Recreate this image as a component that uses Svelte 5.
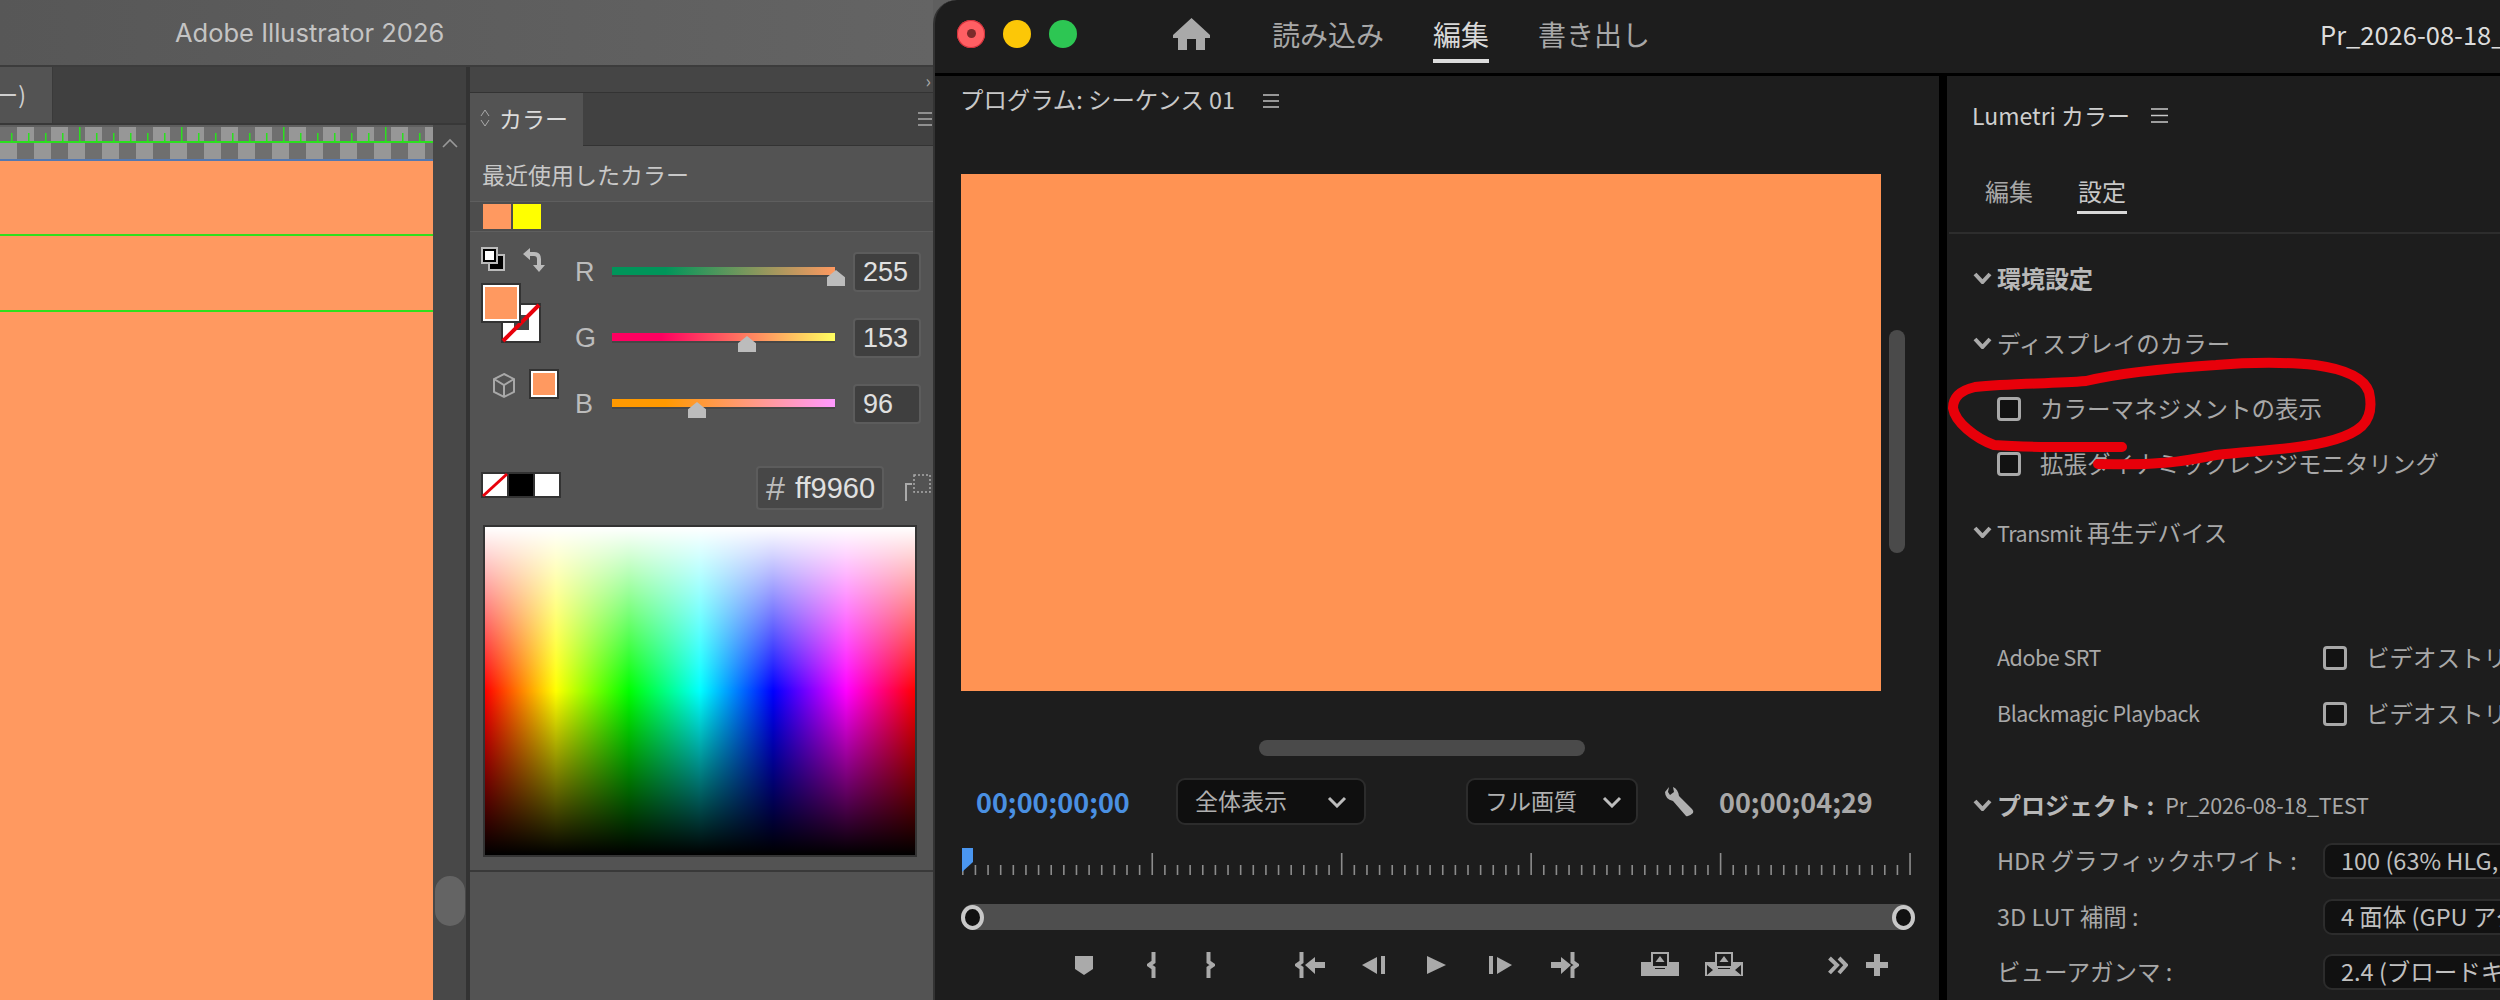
<script>
  const rulerTicks = Array.from({ length: 25 }, (_, i) => 11 + i * 17);
  const timeTicks = Array.from({ length: 76 }, (_, i) => i);
</script>

<div class="desktop">
  <section class="ai">
    <header class="ai-title"><span>Adobe Illustrator 2026</span></header>
    <div class="ai-body">
      <div class="doc">
        <div class="doc-tabs"><div class="doc-tab">ー)</div></div>
        <div class="doc-main">
          <div class="artboard-col">
            <svg class="checker" width="433" height="32">
              <rect x="0" y="14" width="433" height="2" fill="#2be01e" />
              {#each rulerTicks as x, i}
                <rect {x} y={i % 6 === 4 ? 0 : 6} width="1.5" height={i % 6 === 4 ? 14 : 8} fill="#2be01e" />
              {/each}
            </svg>
            <div class="artboard">
              <div class="guide"></div>
              <div class="guide"></div>
            </div>
          </div>
          <div class="gutter">
            <svg class="gutter-up" width="16" height="10" viewBox="0 0 16 10"><path d="M1 9 L8 2 L15 9" fill="none" stroke="#999" stroke-width="1.6" /></svg>
            <div class="gutter-thumb"></div>
          </div>
        </div>
      </div>

      <aside class="color-panel">
        <div class="dock-head"><span>›</span></div>
        <div class="panel-tabs">
          <div class="panel-tab">
            <svg width="10" height="18" viewBox="0 0 10 18"><path d="M1 7 L5 1 L9 7 M1 11 L5 17 L9 11" fill="none" stroke="#aaa" stroke-width="1" /></svg>
            <span>カラー</span>
          </div>
          <div class="panel-tab-rest">
            <svg width="16" height="16" viewBox="0 0 16 16"><path d="M1 2 H15 M1 8 H15 M1 14 H15" stroke="#aaa" stroke-width="1.6" /></svg>
          </div>
        </div>
        <div class="recent-label">最近使用したカラー</div>
        <div class="recent-strip">
          <div class="recent orange"></div>
          <div class="recent yellow"></div>
        </div>

        <div class="mixer">
          <svg class="fill-stroke" width="80" height="152" viewBox="0 0 80 152">
            <rect x="7" y="7" width="17" height="17" fill="#bbb" />
            <rect x="9" y="9" width="13" height="13" fill="#000" />
            <rect x="0" y="0" width="17" height="17" fill="#bbb" />
            <rect x="2" y="2" width="13" height="13" fill="#000" />
            <rect x="4" y="4" width="9" height="9" fill="#fff" />
            <path d="M47 7 H53 Q58 7 58 12 V19" fill="none" stroke="#bbb" stroke-width="4" />
            <path d="M42 7 L49 1 V13 Z M58 25 L52 18 H64 Z" fill="#bbb" />

            <rect x="20" y="56" width="40" height="40" fill="#333" />
            <rect x="22" y="58" width="36" height="36" fill="#fff" />
            <rect x="33" y="68" width="15" height="15" fill="#444" />
            <path d="M22 94 L58 58" stroke="#e8000b" stroke-width="4" />
            <rect x="0" y="36" width="40" height="40" fill="#333" />
            <rect x="2" y="38" width="36" height="36" fill="#fff" />
            <rect x="4" y="40" width="32" height="32" fill="#ff9960" />

            <path d="M23 127 L33 132 V145 L23 150 L13 145 V132 Z M13 132 L23 138 L33 132 M23 138 V150" fill="none" stroke="#a8a8a8" stroke-width="2" />
            <rect x="48" y="122" width="30" height="30" fill="#333" />
            <rect x="50" y="124" width="26" height="26" fill="#fff" />
            <rect x="52" y="126" width="22" height="22" fill="#ff9960" />
          </svg>
          <div class="channels">
            <div class="channel">
              <span class="letter">R</span>
              <div class="slider red"><i class="thumb t-r"></i></div>
              <div class="num">255</div>
            </div>
            <div class="channel">
              <span class="letter">G</span>
              <div class="slider green"><i class="thumb t-g"></i></div>
              <div class="num">153</div>
            </div>
            <div class="channel">
              <span class="letter">B</span>
              <div class="slider blue"><i class="thumb t-b"></i></div>
              <div class="num">96</div>
            </div>
          </div>
        </div>

        <div class="hex-row">
          <svg class="presets" width="80" height="26" viewBox="0 0 80 26">
            <rect width="80" height="26" fill="#333" />
            <rect x="2" y="2" width="24" height="22" fill="#fff" />
            <path d="M2 24 L26 2" stroke="#e8000b" stroke-width="3" />
            <rect x="28" y="2" width="24" height="22" fill="#000" />
            <rect x="54" y="2" width="24" height="22" fill="#fff" />
          </svg>
          <div class="hex"><span class="hash">#</span><span class="hex-val">ff9960</span></div>
          <svg class="websafe" width="26" height="28" viewBox="0 0 26 28">
            <rect x="9" y="1" width="16" height="17" fill="none" stroke="#aaa" stroke-width="1.5" stroke-dasharray="2 2" />
            <path d="M1 27 V10 H7" fill="none" stroke="#aaa" stroke-width="2" />
          </svg>
        </div>

        <div class="spectrum"></div>
        <div class="panel-rule"></div>
      </aside>
    </div>
  </section>

  <section class="pr">
    <header class="pr-head">
      <div class="lights">
        <div class="light close"><i></i></div>
        <div class="light min"></div>
        <div class="light max"></div>
      </div>
      <svg class="home" width="37" height="32" viewBox="0 0 37 32">
        <path d="M18.5 0 L37 17 L37 20 H32 V32 H23 V21 H14 V32 H5 V20 H0 V17 Z" fill="#a9a9a9" />
      </svg>
      <nav class="modes">
        <span>読み込み</span>
        <span class="on">編集</span>
        <span>書き出し</span>
      </nav>
      <div class="project-name">Pr_2026-08-18_TEST</div>
    </header>

    <div class="pr-body">
      <div class="program">
        <div class="program-title">
          プログラム: シーケンス 01
          <svg width="16" height="14" viewBox="0 0 16 14"><path d="M0 1 H16 M0 7 H16 M0 13 H16" stroke="#c0c0c0" stroke-width="1.6" /></svg>
        </div>
        <div class="stage">
          <div class="video"></div>
          <div class="vscroll"></div>
        </div>
        <div class="hscroll"></div>
        <div class="program-bar">
          <span class="tc-now">00;00;00;00</span>
          <div class="pick pick-fit"><span>全体表示</span>
            <svg width="20" height="12" viewBox="0 0 20 12"><path d="M2 2 L10 10 L18 2" fill="none" stroke="#bdbdbd" stroke-width="3" /></svg>
          </div>
          <div class="pick pick-quality"><span>フル画質</span>
            <svg width="20" height="12" viewBox="0 0 20 12"><path d="M2 2 L10 10 L18 2" fill="none" stroke="#bdbdbd" stroke-width="3" /></svg>
          </div>
          <svg class="wrench" width="30" height="30" viewBox="0 0 30 30">
            <path d="M5 0 L1 5 Q1 12 9 14 L22 29 Q25 30 29 26 Q30 24 28 22 L15 9 Q14 2 9 0 L10 5 L6 8 L4 5 Z" fill="#b0b0b0" />
          </svg>
          <span class="tc-end">00;00;04;29</span>
        </div>
        <svg class="time-ruler" width="952" height="27" viewBox="0 0 952 27">
          {#each timeTicks as i}
            <rect x={1 + i * 12.63} y={i % 15 === 0 ? 5 : 17} width="1.6" height={i % 15 === 0 ? 22 : 10} fill="#8c8c8c" />
          {/each}
          <path d="M1 0 H12 V14 L1 24 Z" fill="#4a96f0" />
        </svg>
        <div class="range">
          <div class="range-knob"></div>
          <div class="range-knob"></div>
        </div>
        <div class="transport">
          <svg class="b-marker" width="18" height="26"><path d="M0 4 H18 V17 L9 23 L0 17 Z" /></svg>
          <svg class="b-in" width="9" height="26"><path class="brace" d="M6.5 0 V10 L2 13 L6.5 16 V26" /></svg>
          <svg class="b-out" width="9" height="26"><path class="brace" d="M2.5 0 V10 L7 13 L2.5 16 V26" /></svg>
          <svg class="b-goin" width="30" height="26">
            <path class="brace" d="M6.5 0 V10 L2 13 L6.5 16 V26" />
            <path d="M10 13 L20 5 V10 H30 V16 H20 V22 Z" />
          </svg>
          <svg class="b-back" width="23" height="26"><path d="M0 13 L15 5 V22 Z M19 4 H23 V22 H19 Z" /></svg>
          <svg class="b-play" width="19" height="26"><path d="M0 4 L19 13 L0 22 Z" /></svg>
          <svg class="b-fwd" width="24" height="26"><path d="M0 4 H4 V22 H0 Z M8 5 L23 13 L8 22 Z" /></svg>
          <svg class="b-goout" width="28" height="26">
            <path class="brace" d="M21.5 0 V10 L26 13 L21.5 16 V26" />
            <path d="M20 13 L10 5 V10 H0 V16 H10 V22 Z" />
          </svg>
          <svg class="b-lift" width="38" height="24">
            <path d="M0 10 H14 V24 H0 Z M24 10 H38 V24 H24 Z M11 17 H27 V24 H11 Z" />
            <rect class="box" x="11" y="1" width="16" height="14" />
            <path d="M19 4 L23.500 10 H14.500 Z" />
          </svg>
          <svg class="b-extract" width="38" height="24">
            <path d="M0 10 H13 V24 H0 Z M25 10 H38 V24 H25 Z M12 17 H26 V24 H12 Z" />
            <rect class="box" x="11" y="1" width="16" height="14" />
            <path d="M19 4 L23.500 10 H14.500 Z" />
            <path class="cut" d="M2 13 L8 18 L2 23 Z M36 13 L30 18 L36 23 Z" />
          </svg>
          <svg class="b-more" width="20" height="26"><path class="chev" d="M1.500 6 L9 13 L1.500 21 M11 6 L18 13 L11 21" /></svg>
          <svg class="b-add" width="22" height="26"><path d="M8 2 H14 V10 H22 V16 H14 V24 H8 V16 H0 V10 H8 Z" /></svg>
        </div>
      </div>

      <div class="lumetri">
        <div class="lumetri-title">
          <span>Lumetri カラー</span>
          <svg width="17" height="15" viewBox="0 0 17 15"><path d="M0 1 H17 M0 7.500 H17 M0 14 H17" stroke="#c8c8c8" stroke-width="1.6" /></svg>
        </div>
        <div class="lumetri-tabs">
          <span>編集</span>
          <span class="on">設定</span>
        </div>

        <div class="row head m27">
          <svg class="chevron" width="19" height="12" viewBox="0 0 19 12"><path d="M2 2 L9.500 10 L17 2" /></svg>
          <b>環境設定</b>
        </div>
        <div class="row head m29">
          <svg class="chevron" width="19" height="12" viewBox="0 0 19 12"><path d="M2 2 L9.500 10 L17 2" /></svg>
          <span>ディスプレイのカラー</span>
        </div>
        <div class="row item m29"><i class="check"></i>カラーマネジメントの表示</div>
        <div class="row item m19"><i class="check"></i>拡張ダイナミックレンジモニタリング</div>
        <div class="row head m33">
          <svg class="chevron" width="19" height="12" viewBox="0 0 19 12"><path d="M2 2 L9.500 10 L17 2" /></svg>
          <span><span class="latin">Transmit</span> 再生デバイス</span>
        </div>
        <div class="row setting m89"><span class="label latin">Adobe SRT</span><i class="check"></i>ビデオストリーム</div>
        <div class="row setting m20"><span class="label latin">Blackmagic Playback</span><i class="check"></i>ビデオストリーム</div>
        <div class="row head m56">
          <svg class="chevron" width="19" height="12" viewBox="0 0 19 12"><path d="M2 2 L9.500 10 L17 2" /></svg>
          <b>プロジェクト :</b><span class="proj latin">Pr_2026-08-18_TEST</span>
        </div>
        <div class="row setting m19"><span class="label">HDR グラフィックホワイト :</span><div class="select">100 (63% HLG, 58% PQ)</div></div>
        <div class="row setting m20"><span class="label">3D LUT 補間 :</span><div class="select">4 面体 (GPU アクセラレーション)</div></div>
        <div class="row setting m19"><span class="label">ビューアガンマ :</span><div class="select">2.4 (ブロードキャスト)</div></div>
      </div>
    </div>
  </section>

  <svg class="scribble" width="2500" height="1000" viewBox="0 0 2500 1000">
    <path d="M2122 447 C2080 447 2030 448 1994 445 C1975 438 1955 422 1953 408 C1953 396 1962 390 1975 387 C2010 383 2050 384 2086 381 C2115 374 2170 368 2216 365 C2250 362 2290 362 2315 365 C2345 369 2364 378 2369 392 C2372 405 2371 417 2362 426 C2350 437 2325 444 2290 448 C2265 451 2240 452 2216 455 C2195 459 2180 462 2160 463 C2140 465 2120 464 2098 464" />
  </svg>
</div>

<style>
  :global(body) {
    margin: 0;
    background: #5e5e5e;
  }

  .desktop {
    position: relative;
    display: flex;
    width: 2500px;
    height: 1000px;
    overflow: hidden;
    background: #5f5f5f;
    font-family: "Noto Sans CJK JP", "Noto Sans", sans-serif;
  }

  /* illustrator */
  .ai {
    flex: none;
    display: flex;
    flex-direction: column;
    width: 933px;
    font-family: "Noto Sans CJK JP", "Liberation Sans", sans-serif;
  }

  .ai-title {
    flex: none;
    height: 65px;
    padding-left: 175px;
    display: flex;
    align-items: center;
    border-bottom: 2px solid #3c3c3c;
    background: linear-gradient(90deg, #575757, #646464);
    color: #c4c4c4;
    font-family: Inter, sans-serif;
    font-size: 25.500px;
  }

  .ai-body {
    flex: 1;
    display: flex;
    min-height: 0;
  }

  .doc {
    flex: none;
    width: 466px;
    display: flex;
    flex-direction: column;
  }

  .doc-tabs {
    flex: none;
    height: 58px;
    background: #404040;
    border-bottom: 2px solid #383838;
    box-sizing: border-box;
  }

  .doc-tab {
    width: 53px;
    height: 56px;
    box-sizing: border-box;
    display: flex;
    align-items: center;
    justify-content: flex-end;
    padding: 0 26px 3px 0;
    background: #535353;
    border-right: 1px solid #3a3a3a;
    color: #cfcfcf;
    font-size: 23px;
    overflow: hidden;
    white-space: nowrap;
  }

  .doc-main {
    flex: 1;
    display: flex;
    min-height: 0;
  }

  .artboard-col {
    flex: none;
    width: 433px;
    margin-top: 2px;
  }

  .checker {
    display: block;
    background: repeating-conic-gradient(#979797 0 25%, #6f6f6f 0 50%) 0 -2px / 34px 34px;
  }

  .artboard {
    height: 900px;
    padding-top: 73px;
    background: #ff9960;
    border-top: 2px solid #5578b0;
  }

  .guide {
    height: 2px;
    margin-bottom: 74px;
    background: #2fe01c;
  }

  .gutter {
    flex: 1;
    display: flex;
    flex-direction: column;
    align-items: center;
    background: #484848;
  }

  .gutter-up {
    margin-top: 13px;
  }

  .gutter-thumb {
    width: 30px;
    height: 50px;
    margin-top: 728px;
    border-radius: 15px;
    background: #646464;
  }

  .color-panel {
    flex: none;
    width: 467px;
    box-sizing: border-box;
    display: flex;
    flex-direction: column;
    border-left: 4px solid #333;
    background: #535353;
    color: #c6c6c6;
  }

  .dock-head {
    flex: none;
    height: 25px;
    display: flex;
    align-items: center;
    justify-content: flex-end;
    padding-right: 2px;
    background: #454545;
    border-bottom: 1px solid #333;
    color: #aaa;
    font-size: 18px;
  }

  .panel-tabs {
    flex: none;
    display: flex;
    height: 53px;
  }

  .panel-tab {
    width: 113px;
    display: flex;
    align-items: center;
    gap: 9px;
    padding: 0 0 3px 10px;
    box-sizing: border-box;
    font-size: 23px;
    color: #dcdcdc;
  }

  .panel-tab-rest {
    flex: 1;
    display: flex;
    align-items: center;
    justify-content: flex-end;
    background: #414141;
    border-bottom: 1px solid #333;
  }

  .recent-label {
    flex: none;
    height: 55px;
    padding-left: 12px;
    line-height: 56px;
    font-size: 23px;
    color: #c8c8c8;
  }

  .recent-strip {
    flex: none;
    display: flex;
    gap: 2px;
    height: 31px;
    padding-left: 13px;
    box-sizing: border-box;
    padding-block: 2px;
    background: #4d4d4d;
    border-block: 1px solid #5e5e5e;
  }

  .recent {
    width: 28px;
  }

  .orange {
    background: #ff9960;
  }

  .yellow {
    background: #ffff00;
  }

  .mixer {
    flex: none;
    display: flex;
    margin-top: 7px;
    padding-left: 11px;
  }

  .fill-stroke {
    flex: none;
    margin-top: 8px;
    margin-right: 14px;
  }

  .channels {
    display: flex;
    flex-direction: column;
  }

  .channel {
    height: 66px;
    display: flex;
    align-items: center;
  }

  .letter {
    width: 37px;
    font-family: "Liberation Sans", sans-serif;
    font-size: 27px;
    color: #bcbcbc;
  }

  .slider {
    position: relative;
    width: 223px;
    height: 8px;
    margin-top: -2px;
    box-shadow: 0 2px 0 #464646;
  }

  .red {
    background: linear-gradient(90deg, #00955a 0 24%, #ff9960);
  }

  .green {
    background: linear-gradient(90deg, #ff0060 0 22%, #ffff60);
  }

  .blue {
    background: linear-gradient(90deg, #ff9900 0 24%, #ff99ff);
  }

  .thumb {
    position: absolute;
    top: 3px;
    width: 18px;
    height: 16px;
    background: #bcbcbc;
    clip-path: polygon(50% 0, 100% 45%, 100% 100%, 0 100%, 0 45%);
  }

  .t-r {
    left: 215px;
  }

  .t-g {
    left: 126px;
  }

  .t-b {
    left: 76px;
  }

  .num {
    width: 68px;
    height: 40px;
    margin-left: 18px;
    padding-left: 8px;
    box-sizing: border-box;
    display: flex;
    align-items: center;
    border: 2px solid #5c5c5c;
    border-radius: 4px;
    background: #3f3f3f;
    color: #e0e0e0;
    font-family: "Liberation Sans", sans-serif;
    font-size: 27px;
  }

  .hex-row {
    flex: none;
    display: flex;
    align-items: flex-start;
    height: 44px;
    margin-top: 29px;
    padding-left: 11px;
  }

  .presets {
    margin-top: 6px;
  }

  .hex {
    width: 128px;
    height: 44px;
    margin-left: 195px;
    box-sizing: border-box;
    display: flex;
    align-items: center;
    border: 2px solid #5c5c5c;
    border-radius: 4px;
    background: #474747;
    color: #e0e0e0;
    font-family: "Liberation Sans", sans-serif;
    font-size: 29px;
  }

  .hash {
    width: 37px;
    padding-left: 8px;
    box-sizing: border-box;
    font-size: 34px;
    color: #bcbcbc;
  }

  .websafe {
    margin: 8px 0 0 21px;
  }

  .spectrum {
    flex: none;
    width: 430px;
    height: 328px;
    margin: 15px 0 0 13px;
    border: 2px solid #333;
    background:
      linear-gradient(180deg, #fff, rgba(255, 255, 255, 0) 50%, rgba(0, 0, 0, 0) 50%, #000),
      linear-gradient(90deg, #f00, #ff0 16.500%, #0f0 33.500%, #0ff 50%, #00f 67%, #f0f 84%, #f00);
  }

  .panel-rule {
    height: 2px;
    margin-top: 13px;
    background: #393939;
  }

  /* premiere */
  .pr {
    flex: 1;
    min-width: 0;
    display: flex;
    flex-direction: column;
    border-left: 2px solid #333;
    border-top-left-radius: 24px;
    background: #1d1d1d;
    overflow: hidden;
    color: #a8a8a8;
  }

  .pr-head {
    flex: none;
    display: flex;
    align-items: center;
    height: 67px;
    padding-bottom: 6px;
    border-bottom: 3px solid #000;
  }

  .lights {
    display: flex;
    gap: 18px;
    margin-left: 22px;
  }

  .light {
    width: 28px;
    height: 28px;
    display: flex;
    align-items: center;
    justify-content: center;
    border-radius: 50%;
  }

  .light i {
    width: 9px;
    height: 9px;
    border-radius: 50%;
    background: #7c2a2a;
  }

  .close {
    background: #ff5f63;
    box-shadow: inset 0 0 0 1px #d2303a;
  }

  .min {
    background: #fcc707;
  }

  .max {
    background: #2dc653;
  }

  .home {
    margin-left: 96px;
    margin-top: 1px;
  }

  .modes {
    display: flex;
    gap: 49px;
    margin-left: 62px;
    font-size: 28px;
  }

  .modes span {
    position: relative;
    line-height: 40px;
  }

  .modes .on {
    color: #d8d8d8;
  }

  .modes .on::after {
    content: "";
    position: absolute;
    left: 0;
    right: 0;
    bottom: -9px;
    height: 4px;
    background: #dcdcdc;
  }

  .project-name {
    margin-left: auto;
    flex: none;
    width: 180px;
    overflow: hidden;
    white-space: nowrap;
    font-size: 25.500px;
    color: #dcdcdc;
  }

  .pr-body {
    flex: 1;
    display: flex;
    min-height: 0;
  }

  .program {
    flex: none;
    width: 1004px;
    display: flex;
    flex-direction: column;
    border-right: 8px solid #000;
  }

  .program-title {
    flex: none;
    height: 98px;
    box-sizing: border-box;
    padding: 7px 0 0 25px;
    display: flex;
    align-items: flex-start;
    gap: 28px;
    font-size: 23.400px;
    line-height: 33px;
    color: #c8c8c8;
  }

  .program-title svg {
    margin-top: 11px;
  }

  .stage {
    flex: none;
    display: flex;
    margin-left: 26px;
  }

  .video {
    width: 920px;
    height: 517px;
    background: #ff9353;
  }

  .vscroll {
    width: 16px;
    height: 223px;
    margin: 156px 0 0 8px;
    border-radius: 8px;
    background: #4a4a4a;
  }

  .hscroll {
    flex: none;
    width: 326px;
    height: 16px;
    margin: 49px 0 0 324px;
    border-radius: 8px;
    background: #4a4a4a;
  }

  .program-bar {
    flex: none;
    display: flex;
    align-items: center;
    height: 47px;
    margin-top: 22px;
    padding-left: 41px;
  }

  .tc-now {
    width: 200px;
    color: #4a90e2;
    font-size: 27px;
    font-weight: 700;
  }

  .pick {
    height: 47px;
    padding: 0 17px;
    box-sizing: border-box;
    display: flex;
    align-items: center;
    justify-content: space-between;
    border: 2px solid #2c2c2c;
    border-radius: 9px;
    background: #0f0f0f;
    font-size: 23px;
    color: #b0b0b0;
  }

  .pick span {
    margin-top: -3px;
  }

  .pick-fit {
    width: 190px;
    margin-right: 100px;
  }

  .pick-quality {
    width: 172px;
    padding-right: 14px;
  }

  .wrench {
    margin-left: 26px;
  }

  .tc-end {
    margin-left: 25px;
    font-size: 27px;
    font-weight: 700;
  }

  .time-ruler {
    flex: none;
    margin: 23px 0 0 26px;
  }

  .range {
    flex: none;
    display: flex;
    justify-content: space-between;
    align-items: center;
    width: 954px;
    height: 26px;
    margin: 29px 0 0 26px;
    border-radius: 13px;
    background: #4e4e4e;
  }

  .range-knob {
    width: 23px;
    height: 25px;
    box-sizing: border-box;
    border: 4px solid #c8c8c8;
    border-radius: 50%;
    background: #111;
  }

  .transport {
    flex: none;
    display: flex;
    margin-top: 22px;
    padding-left: 140px;
  }

  .transport svg {
    flex: none;
    fill: #aaa;
  }

  .brace,
  .chev {
    fill: none;
    stroke: #aaa;
    stroke-width: 4;
  }

  .box {
    fill: #1d1d1d;
    stroke: #aaa;
    stroke-width: 2;
  }

  .cut {
    fill: #1d1d1d;
  }

  .b-in {
    margin-left: 54px;
  }

  .b-out {
    margin-left: 50px;
  }

  .b-goin {
    margin-left: 80px;
  }

  .b-back {
    margin-left: 37px;
  }

  .b-play {
    margin-left: 42px;
  }

  .b-fwd {
    margin-left: 43px;
  }

  .b-goout {
    margin-left: 38px;
  }

  .b-lift {
    margin-left: 62px;
  }

  .b-extract {
    margin-left: 26px;
  }

  .b-more {
    margin-left: 85px;
  }

  .b-add {
    margin-left: 18px;
  }

  .lumetri {
    flex: 1;
    min-width: 0;
    display: flex;
    flex-direction: column;
    overflow: hidden;
  }

  .lumetri-title {
    flex: none;
    height: 80px;
    box-sizing: border-box;
    padding: 0 0 2px 25px;
    display: flex;
    align-items: center;
    gap: 21px;
    font-size: 23px;
    color: #cfcfcf;
  }

  .lumetri-tabs {
    flex: none;
    display: flex;
    gap: 45px;
    height: 76px;
    padding-left: 36px;
    border-bottom: 2px solid #2d2d2d;
    margin-left: 2px;
    font-size: 24px;
  }

  .lumetri-tabs span {
    position: relative;
    height: 58px;
    line-height: 69px;
  }

  .lumetri-tabs .on {
    color: #c8c8c8;
  }

  .lumetri-tabs .on::after {
    content: "";
    position: absolute;
    left: -1px;
    right: -1px;
    bottom: 0;
    height: 3px;
    background: #d8d8d8;
  }

  .row {
    flex: none;
    display: flex;
    align-items: center;
    box-sizing: border-box;
    height: 36px;
    padding-bottom: 3px;
    font-size: 23.500px;
    white-space: nowrap;
  }

  .latin {
    font-size: 21.500px;
    letter-spacing: -0.5px;
  }

  .head {
    padding-left: 26px;
  }

  .head b {
    font-weight: 700;
    font-size: 24px;
    color: #b8b8b8;
  }

  .head .proj {
    margin-left: 11px;
    letter-spacing: -0.2px;
  }

  .chevron {
    flex: none;
    margin-right: 5px;
    fill: none;
    stroke: #aaa;
    stroke-width: 4;
  }

  .item,
  .setting {
    padding-left: 50px;
  }

  .check {
    flex: none;
    width: 24px;
    height: 24px;
    margin: 3px 19px 0 0;
    box-sizing: border-box;
    border: 3px solid #a8a8a8;
    border-radius: 4px;
    background: #121212;
  }

  .label {
    flex: none;
    width: 326px;
  }

  .select {
    flex: none;
    width: 320px;
    height: 36px;
    margin: 3px 0 0;
    padding: 0 0 3px 16px;
    box-sizing: border-box;
    display: flex;
    align-items: center;
    border: 2px solid #2c2c2c;
    border-radius: 9px;
    background: #111;
    color: #c0c0c0;
  }

  .m19 {
    margin-top: 19px;
  }

  .m20 {
    margin-top: 20px;
  }

  .m27 {
    margin-top: 27px;
  }

  .m29 {
    margin-top: 29px;
  }

  .m33 {
    margin-top: 33px;
  }

  .m56 {
    margin-top: 56px;
  }

  .m89 {
    margin-top: 89px;
  }

  .scribble {
    position: absolute;
    inset: 0;
    pointer-events: none;
    filter: blur(0.6px);
  }

  .scribble path {
    fill: none;
    stroke: #e8000a;
    stroke-width: 10;
    stroke-linecap: round;
    stroke-linejoin: round;
  }
</style>
